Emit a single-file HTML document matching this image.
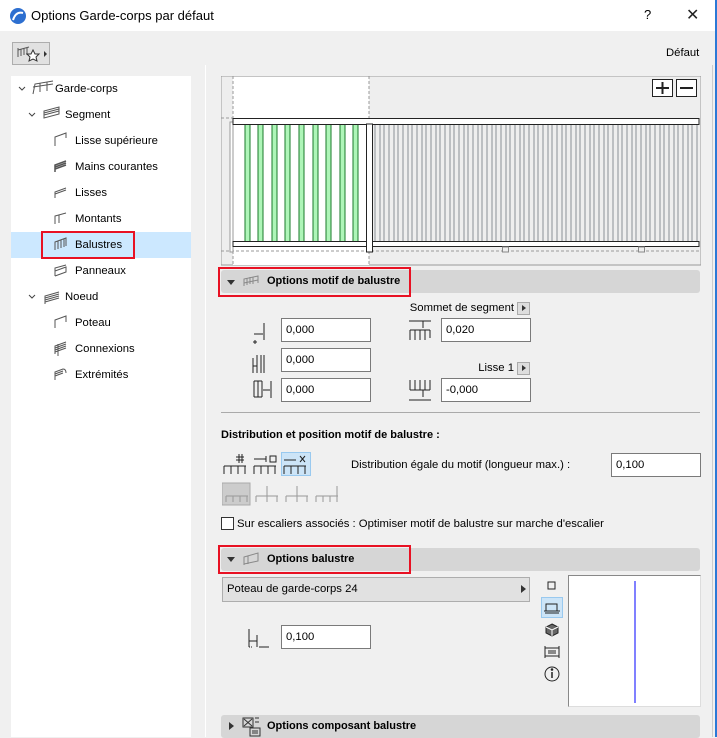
<!DOCTYPE html>
<html><head><meta charset="utf-8"><style>
*{box-sizing:border-box;margin:0;padding:0}
body{width:717px;height:737px;overflow:hidden;background:#f0f0f0;font-family:"Liberation Sans",sans-serif;font-size:11.3px;color:#000;position:relative}
.a{position:absolute}
.tb{left:0;top:0;width:717px;height:31px;background:#fff;border-right:2px solid #2b79d6}
.tree{left:11px;top:76px;width:180px;height:661px;background:#fff}
.ti{position:absolute;height:26px;line-height:26px;font-size:11.3px}
.inp{position:absolute;background:#fff;border:1px solid #7a7a7a;height:24px;line-height:22px;padding-left:4px;font-size:11.3px}
.bar{position:absolute;left:221px;width:479px;height:23px;background:#d6d6d6;border-radius:3px;font-weight:bold;font-size:11px;line-height:23px}
.red{position:absolute;border:2px solid #e81123}
.tri{position:absolute;width:0;height:0;border-left:4px solid transparent;border-right:4px solid transparent;border-top:5px solid #333}
</style></head><body>
<div class="a tb"></div>
<div class="a" style="left:715px;top:31px;width:2px;height:706px;background:#2b79d6"></div>
<svg class="a" style="left:9px;top:7px" width="18" height="18"><circle cx="9" cy="9" r="8" fill="#2d6fd0"/><path d="M4 13 Q7 4 14 6" stroke="#fff" stroke-width="2" fill="none"/></svg>
<div class="a" style="left:31px;top:8px;font-size:13px">Options Garde-corps par défaut</div>
<div class="a" style="left:644px;top:7px;font-size:13px">?</div>
<div class="a" style="left:686px;top:5px;font-size:16px;color:#222">✕</div>
<div class="a" style="left:12px;top:42px;width:38px;height:23px;border:1px solid #adadad;background:#e1e1e1"></div>
<svg class="a" style="left:15px;top:44px" width="34" height="20"><path d="M3 13 L3 6 L14 3 M3 6 L3 4 M6 12 V5 M9 11 V4 M12 11V4" stroke="#555" fill="none"/><path d="M18 6 l2 4 4 0 -3 3 1 4 -4-2 -4 2 1-4 -3-3 4 0z" stroke="#333" fill="#fff"/><path d="M29 7 l3 3 -3 3z" fill="#333"/></svg>
<div class="a" style="left:666px;top:47px">Défaut</div>
<div class="a" style="left:205px;top:65px;width:1px;height:672px;background:#fff"></div>
<div class="a" style="left:712px;top:65px;width:1px;height:672px;background:#ccc"></div>

<div class="a tree">
<div class="a" style="left:0;top:156px;width:180px;height:26px;background:#cce8ff"></div>
<div class="ti" style="left:44px;top:0">Garde-corps</div>
<div class="ti" style="left:54px;top:26px">Segment</div>
<div class="ti" style="left:64px;top:52px">Lisse supérieure</div>
<div class="ti" style="left:64px;top:78px">Mains courantes</div>
<div class="ti" style="left:64px;top:104px">Lisses</div>
<div class="ti" style="left:64px;top:130px">Montants</div>
<div class="ti" style="left:64px;top:156px">Balustres</div>
<div class="ti" style="left:64px;top:182px">Panneaux</div>
<div class="ti" style="left:54px;top:208px">Noeud</div>
<div class="ti" style="left:64px;top:234px">Poteau</div>
<div class="ti" style="left:64px;top:260px">Connexions</div>
<div class="ti" style="left:64px;top:286px">Extrémités</div>
<svg class="a" style="left:0;top:0" width="60" height="310" fill="none" stroke="#555">
<path d="M8 11 l3 3 3-3 M18 37 l3 3 3-3 M18 219 l3 3 3-3" stroke="#444"/>
<path d="M22 18 L24 8 L42 5 M29 16 V7 M36 15 V6 M22 11 L42 8"/>
<path d="M33 42 L33 35 L48 31 L48 38 Z M33 37 L48 33 M33 39 L48 35"/>
<path d="M44 70 V61 L55 57 V62"/>
<path d="M44 96 V89 L55 85 M44 91 L55 87 M44 93 L55 89" stroke-width="1.5"/>
<path d="M44 122 V116 L55 112 M44 118 L55 114"/>
<path d="M44 148 V140 L55 137 M48 147 V139"/>
<path d="M44 174 V166 L55 162 V170 M47 173V165 M50 172V164 M53 171V163"/>
<path d="M44 200 V195 L55 191 V196 L44 200 M44 195 L44 192 L55 189"/>
<path d="M34 228 V220 L48 216 M34 222 L48 218 M34 224 L48 220 M34 226 L48 222"/>
<path d="M44 252 V244 L55 240 V246"/>
<path d="M44 278 V270 L55 266 M44 272L55 268 M44 274 L55 270 M47 280V268 M44 276 L55 272"/>
<path d="M44 304 V296 L52 293 Q55 293 55 297 M44 298 L52 295 M44 300 L52 297"/>
</svg>
</div>
<div class="red" style="left:41px;top:231px;width:94px;height:28px"></div>

<svg class="a" style="left:221px;top:76px" width="480" height="190">
<rect x="0" y="0" width="480" height="189" fill="#eee" stroke="#999"/>
<rect x="12" y="1" width="136" height="188" fill="#fff"/>
<path d="M12 0 V189 M148 0 V189 M0 42 H12 M0 175 H479" stroke="#999" stroke-dasharray="3 2"/>
<g stroke="#8a9096" stroke-width="1">
<path d="M154 48V166 M159 48V166 M163 48V166 M168 48V166 M173 48V166 M177 48V166 M182 48V166 M187 48V166 M191 48V166 M196 48V166 M201 48V166 M205 48V166 M210 48V166 M215 48V166 M219 48V166 M224 48V166 M229 48V166 M233 48V166 M238 48V166 M243 48V166 M247 48V166 M252 48V166 M257 48V166 M261 48V166 M266 48V166 M271 48V166 M275 48V166 M280 48V166 M285 48V166 M289 48V166 M294 48V166 M299 48V166 M303 48V166 M308 48V166 M313 48V166 M317 48V166 M322 48V166 M327 48V166 M331 48V166 M336 48V166 M341 48V166 M345 48V166 M350 48V166 M355 48V166 M359 48V166 M364 48V166 M369 48V166 M373 48V166 M378 48V166 M383 48V166 M387 48V166 M392 48V166 M397 48V166 M401 48V166 M406 48V166 M411 48V166 M415 48V166 M420 48V166 M425 48V166 M429 48V166 M434 48V166 M439 48V166 M443 48V166 M448 48V166 M453 48V166 M457 48V166 M462 48V166 M467 48V166 M471 48V166 M476 48V166"/>
</g>
<g fill="#aef5b8" stroke="#1a7a2a"><rect x="24" y="48" width="5" height="118"/><rect x="37" y="48" width="5" height="118"/><rect x="51" y="48" width="5" height="118"/><rect x="64" y="48" width="5" height="118"/><rect x="78" y="48" width="5" height="118"/><rect x="92" y="48" width="5" height="118"/><rect x="105" y="48" width="5" height="118"/><rect x="119" y="48" width="5" height="118"/><rect x="132" y="48" width="5" height="118"/></g>
<rect x="9" y="46" width="3" height="130" fill="#fff" stroke="#999"/>
<rect x="12" y="42.5" width="466" height="6" fill="#fff" stroke="#222"/>
<rect x="12" y="165.5" width="466" height="5" fill="#fff" stroke="#222"/>
<rect x="145.5" y="48" width="6" height="128" fill="#fff" stroke="#222"/>
<rect x="281.5" y="171" width="6" height="5" fill="#eee" stroke="#888"/>
<rect x="417.5" y="171" width="6" height="5" fill="#eee" stroke="#888"/>
<rect x="431.5" y="3.5" width="20" height="17" fill="#fff" stroke="#222"/><path d="M441.5 6v12M435 12h13" stroke="#222" stroke-width="2"/>
<rect x="455.5" y="3.5" width="20" height="17" fill="#fff" stroke="#222"/><path d="M459 12h13" stroke="#222" stroke-width="2"/>
</svg>

<div class="bar" style="top:270px"><span style="position:absolute;left:46px">Options motif de balustre</span></div>
<div class="tri" style="left:227px;top:280px"></div>
<svg class="a" style="left:242px;top:274px" width="20" height="14"><path d="M2 12V5 L16 2 V9 M5 11V4 M8 10V3 M11 10V3 M2 9 L16 6" stroke="#888" fill="none"/></svg>
<div class="red" style="left:218px;top:267px;width:193px;height:30px"></div>

<div class="a" style="left:380px;width:134px;text-align:right;top:302px">Sommet de segment</div>
<div class="a" style="left:517px;top:302px;width:13px;height:13px;background:#ddd;border:1px solid #aaa"></div><div class="a" style="left:522px;top:305px;border-top:3px solid transparent;border-bottom:3px solid transparent;border-left:4px solid #333"></div>
<div class="a" style="left:440px;width:74px;text-align:right;top:362px">Lisse 1</div>
<div class="a" style="left:517px;top:362px;width:13px;height:13px;background:#ddd;border:1px solid #aaa"></div><div class="a" style="left:522px;top:365px;border-top:3px solid transparent;border-bottom:3px solid transparent;border-left:4px solid #333"></div>
<div class="inp" style="left:281px;top:318px;width:90px">0,000</div>
<div class="inp" style="left:281px;top:348px;width:90px">0,000</div>
<div class="inp" style="left:281px;top:378px;width:90px">0,000</div>
<div class="inp" style="left:441px;top:318px;width:90px">0,020</div>
<div class="inp" style="left:441px;top:378px;width:90px">-0,000</div>
<svg class="a" style="left:250px;top:318px" width="25" height="86" fill="none" stroke="#222">
<path d="M14 5V22 M4 16h9 M5 22 v4 M3 24h4" /><path d="M3 40V55 M7 37V55 M11 37V55 M14 37V55 M3 48h4" />
<path d="M4 63V79 M8 63V79 M12 63V79 M4 63h8 M4 79h8 M13 72h7 M21 63V80"/>
</svg>
<svg class="a" style="left:408px;top:318px" width="25" height="86" fill="none" stroke="#222">
<path d="M1 3h22 M15 3v7 M2 12h20 M2 12v10 M7 12v10 M12 12v10 M17 12v10 M22 12v8"/>
<path d="M2 62v10 M7 62v10 M12 62v10 M17 62v10 M22 62v10 M2 72h20 M15 72v7 M1 82h22"/>
</svg>
<div class="a" style="left:221px;top:412px;width:479px;height:1px;background:#aaa"></div>
<div class="a" style="left:221px;top:429px;font-weight:bold;font-size:11px">Distribution et position motif de balustre :</div>
<div class="a" style="left:281px;top:452px;width:30px;height:24px;background:#cce4f7;border:1px solid #99c9ef"></div>
<svg class="a" style="left:222px;top:452px" width="120" height="60" fill="none" stroke="#222">
<path d="M2 14h22 M2 14v8 M9 14v8 M16 14v8 M23 14v8 M14 5h8 M14 8h8 M17 2v9 M20 2v9"/>
<path d="M32 14h22 M32 14v8 M39 14v8 M46 14v8 M53 14v8 M32 7h12 M44 4v6 M48 4h6v6h-6z"/>
<path d="M62 14h22 M62 14v8 M69 14v8 M76 14v8 M83 14v8 M62 8h12 M78 4l5 6 M83 4l-5 6"/>
<rect x="0" y="31" width="28" height="22" fill="#ccc" stroke="#aaa"/>
<g stroke="#999"><path d="M4 44h22 M4 44v6 M11 44v6 M18 44v6 M25 44v6 M34 44h22 M34 44v6 M45 34v16 M55 44v6 M64 44h22 M64 44v6 M75 34v16 M85 44v6 M94 44h22 M94 44v6 M101 44v6 M108 44v6 M115 34v16"/></g>
</svg>
<div class="a" style="left:351px;top:459px">Distribution égale du motif (longueur max.) :</div>
<div class="inp" style="left:611px;top:453px;width:90px">0,100</div>
<div class="a" style="left:221px;top:517px;width:13px;height:13px;background:#fff;border:1px solid #333"></div>
<div class="a" style="left:237px;top:518px">Sur escaliers associés : Optimiser motif de balustre sur marche d'escalier</div>

<div class="bar" style="top:548px"><span style="position:absolute;left:46px">Options balustre</span></div>
<div class="tri" style="left:227px;top:557px"></div>
<svg class="a" style="left:242px;top:551px" width="20" height="16"><path d="M2 14V6 L16 2 V10 L2 13 M6 13V5" stroke="#888" fill="none"/></svg>
<div class="red" style="left:218px;top:545px;width:193px;height:29px"></div>
<div class="a" style="left:222px;top:577px;width:308px;height:25px;background:#e1e1e1;border:1px solid #adadad;line-height:23px;padding-left:4px">Poteau de garde-corps 24</div>
<div class="a" style="left:521px;top:585px;border-top:4px solid transparent;border-bottom:4px solid transparent;border-left:5px solid #333"></div>
<div class="inp" style="left:281px;top:625px;width:90px">0,100</div>
<svg class="a" style="left:247px;top:627px" width="25" height="22" fill="none" stroke="#222"><path d="M2 2v18 M2 14h8 M10 8v12 M12 20h10"/><path d="M2 20h4" stroke-dasharray="1 1"/></svg>
<div class="a" style="left:541px;top:597px;width:22px;height:21px;background:#cce4f7;border:1px solid #99c9ef"></div>
<svg class="a" style="left:540px;top:576px" width="24" height="108" fill="none" stroke="#222">
<rect x="8" y="6" width="7" height="7"/>
<path d="M6 35v-7h11v7 M4 35h16 M5 37h14"/>
<path d="M12 48l6 3v6l-6 3-6-3v-6z" fill="#666"/><path d="M6 51l6 3 6-3 M12 54v6" stroke="#fff"/>
<path d="M5 70v12 M19 70v12 M5 72h14 M5 80h14 M8 75h8 M8 77h8"/>
<circle cx="12" cy="98" r="7"/><path d="M12 96v6" stroke-width="1.5"/><circle cx="12" cy="93.5" r=".8" fill="#222"/>
</svg>
<div class="a" style="left:568px;top:575px;width:133px;height:132px;background:#fff;border:1px solid #888;border-right-color:#ddd;border-bottom-color:#ddd"></div>
<div class="a" style="left:634px;top:581px;width:2px;height:122px;background:#8080ff"></div>
<div class="bar" style="top:715px"><span style="position:absolute;left:46px">Options composant balustre</span></div>
<div class="a" style="left:229px;top:722px;border-top:4px solid transparent;border-bottom:4px solid transparent;border-left:5px solid #333"></div>
<svg class="a" style="left:241px;top:716px" width="22" height="21" fill="none" stroke="#333"><rect x="2" y="2" width="10" height="9"/><path d="M3 3l8 7 M11 3l-8 7 M9 12h10v8H9z M11 15h6 M11 17h6 M14 2h4 M14 6h4"/></svg>
</body></html>
